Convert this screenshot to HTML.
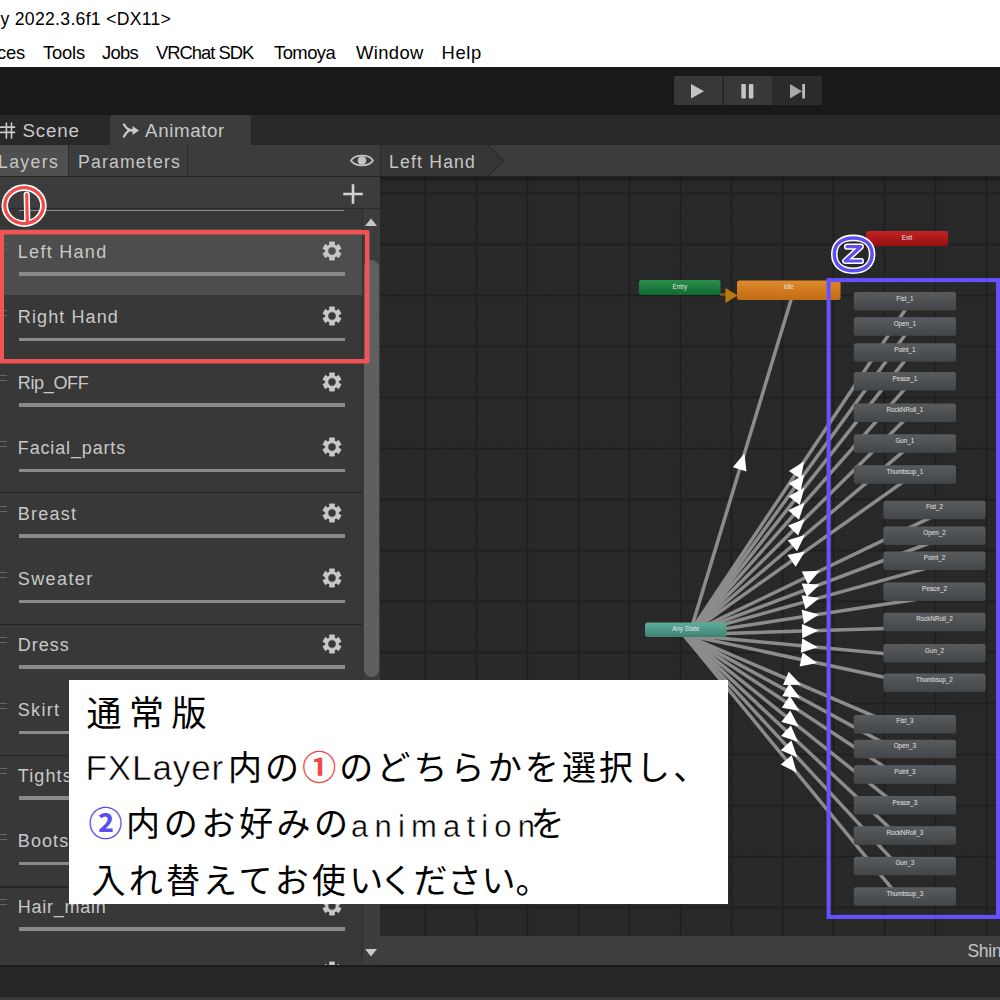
<!DOCTYPE html>
<html lang="ja"><head><meta charset="utf-8"><title>Animator</title>
<style>
*{margin:0;padding:0;box-sizing:border-box}
html,body{width:1000px;height:1000px;overflow:hidden;background:#fff}
body{position:relative;font-family:"Liberation Sans","Noto Sans CJK JP",sans-serif;color:#c4c4c4}
.abs,body>div,body>svg,body>i,body>span{position:absolute}
i{display:block;position:absolute}
#title{left:0.5px;top:8.5px;font-size:17.6px;color:#000;white-space:nowrap;letter-spacing:.3px}
#menu{left:0;top:41.5px;font-size:18.4px;color:#000;white-space:nowrap;height:22px;width:1000px}
#menu span{position:absolute;top:0}
#tool{left:0;top:67px;width:1000px;height:48px;background:#191919}
#play{left:674px;top:76px;width:148px;height:29px;background:#383838;border-radius:2px;overflow:hidden}
#tabs{left:0;top:115px;width:1000px;height:30px;background:#282828}
#tabA{left:110px;top:115px;width:141px;height:29.500px;background:#3c3c3c;border-radius:3px 3px 0 0}
.tt{font-size:18.8px;color:#c8c8c8;white-space:nowrap;top:119.5px;letter-spacing:.8px}
#sub{left:0;top:144.500px;width:1000px;height:32px;background:#3c3c3c}
#subline{left:0;top:176px;width:1000px;height:1px;background:#232323}
#lay{left:0;top:145px;width:68.500px;height:31px;background:#4f4f4f}
.sv{width:1px;height:31px;top:145px;background:#2a2a2a}
.st2{font-size:17.6px;color:#c6c6c6;white-space:nowrap;top:151.500px;letter-spacing:1.2px}
#panel{left:0;top:177px;width:380px;height:788px;background:#383838;overflow:hidden}
#track{left:362px;top:209px;width:18px;height:756px;background:#3d3d3d;border-left:1px solid #303030}
#thumb{left:363.500px;top:260px;width:15px;height:417px;background:#5f5f5f;border-radius:7.500px}
.row{position:absolute;left:0;width:362px;height:65.5px}
.row.sel{background:#4d4d4d}
.ln{position:absolute;left:17.8px;top:12.5px;font-size:18px;color:#c8c8c8;white-space:nowrap;line-height:20px}
.bar{left:18.5px;top:43.2px;width:326px;height:3.4px;background:#8a8a8a}
.h1,.h2{left:0;width:7px;height:1px;background:#666}
.h1{top:15px}.h2{top:20px}
.gear{position:absolute;left:322px;width:20px;height:20px}
.sep{left:0;width:362px;height:1.5px;background:#262626}
#graph{left:380px;top:177px;width:620px;height:759px;background-color:#292929;overflow:hidden}
#bbar{left:380px;top:936px;width:620px;height:29px;background:#3e3e3e}
#bdark{left:0;top:965px;width:1000px;height:32px;background:#262626;border-top:2px solid #1c1c1c}
#bstrip{left:0;top:997px;width:1000px;height:3px;background:#383838}
#note{left:69px;top:680px;width:659px;height:224px;background:#fff}
.hw{position:absolute;white-space:nowrap;color:#000;font-weight:400;font-size:34px;line-height:44px}
.lat{-webkit-text-stroke:.5px #fff}
svg text.nl{fill:#e4e4e4;text-anchor:middle;dominant-baseline:middle;font-family:"Liberation Sans",sans-serif}
.st{fill:url(#gst)}.any{fill:url(#gany)}.ent{fill:url(#gent)}.idl{fill:url(#gidl)}.ext{fill:url(#gext)}
</style></head><body>
<div id="title">y 2022.3.6f1 &lt;DX11&gt;</div>
<div id="menu"><span style="left:-3px;letter-spacing:-.2px">ces</span><span style="left:43px;letter-spacing:-.18px">Tools</span><span style="left:102px;letter-spacing:-.72px">Jobs</span><span style="left:156px;letter-spacing:-1px">VRChat SDK</span><span style="left:274px;letter-spacing:-.53px">Tomoya</span><span style="left:356px;letter-spacing:.37px">Window</span><span style="left:441.5px;letter-spacing:.64px">Help</span></div>
<div id="tool"></div>
<div id="play">
<svg width="148" height="29" viewBox="0 0 148 29" style="position:absolute;left:0;top:0">
<rect x="98.500" y="0" width="50" height="29" fill="#2b2b2b"/>
<rect x="48.600" y="0" width="1.200" height="29" fill="#1e1e1e"/><rect x="98" y="0" width="1" height="29" fill="#2b2b2b"/>
<polygon points="17,8 17,22.500 30,15.200" fill="#c4c4c4"/>
<rect x="67.300" y="8" width="4.600" height="14.500" rx="1" fill="#c4c4c4"/><rect x="74.800" y="8" width="4.600" height="14.500" rx="1" fill="#c4c4c4"/>
<polygon points="116,8 116,22.500 128,15.200" fill="#a8a8a8"/><rect x="128.300" y="8" width="2.600" height="14.500" fill="#c4c4c4"/>
</svg></div>
<div id="tabs"></div><div id="tabA"></div>
<svg style="left:0;top:121px" width="20" height="19" viewBox="0 0 20 19"><g stroke="#cacaca" stroke-width="1.600" fill="none"><path d="M0 6.100H15.200M0 11.400H15.200M6.400 1.500V17.800M11.500 1.500V17.800"/></g></svg>
<span class="tt" style="left:22.5px">Scene</span>
<svg style="left:121px;top:122px" width="20" height="17" viewBox="0 0 20 17"><g stroke="#cccccc" stroke-width="2.300" fill="none" stroke-linecap="round"><path d="M3 2.500C5.500 6.500 7.500 8.500 13 8.500M3 14.500C5 11 6 9.500 8.500 8.500"/></g><polygon points="11.500,4 18,8.500 11.500,13" fill="#cccccc"/></svg>
<span class="tt" style="left:145px;letter-spacing:.6px">Animator</span>
<div id="sub"></div><div id="lay"></div><i class="sv" style="left:68px"></i><i class="sv" style="left:187px"></i><i class="sv" style="left:380px"></i>
<span class="st2" style="left:-2px;letter-spacing:1.4px">Layers</span><span class="st2" style="left:78px">Parameters</span>
<svg style="left:350px;top:152px" width="24" height="17" viewBox="0 0 24 17"><path d="M1 8.500C5 2 19 2 23 8.500C19 15 5 15 1 8.500Z" fill="none" stroke="#c4c4c4" stroke-width="1.800"/><circle cx="12" cy="8.500" r="4.300" fill="#c4c4c4"/></svg>
<svg style="left:381px;top:145px" width="126" height="31" viewBox="0 0 126 31"><path d="M0 0H107L122.500 15.500L107 31H0Z" fill="#363636"/><path d="M107 0L122.500 15.500L107 31" fill="none" stroke="#2a2a2a" stroke-width="1.300"/></svg>
<span class="st2" style="left:389px">Left Hand</span>
<div id="subline"></div>

<div id="panel"></div><i style="left:0;top:177px;width:380px;height:31.500px;background:#3c3c3c;border-bottom:1px solid #2c2c2c"></i>
<i style="left:19px;top:209.500px;width:325px;height:1px;background:#8e8e8e"></i>
<svg style="left:343px;top:183.500px" width="20" height="20" viewBox="0 0 20 20"><path d="M10 0.200V19.800M0.200 10H19.800" stroke="#d2d2d2" stroke-width="2.600"/></svg>
<div id="track"></div><div id="thumb"></div>
<svg style="left:365px;top:218px" width="12" height="8" viewBox="0 0 12 8"><polygon points="6,0.500 12,8 0,8" fill="#c8c8c8"/></svg>
<svg style="left:365px;top:949.300px" width="12" height="8" viewBox="0 0 12 8"><polygon points="0,0 12,0 6,7.500" fill="#c8c8c8"/></svg>
<div id="rows" style="left:0;top:0;width:362px;height:965px;overflow:hidden">
<div class="row sel" style="top:229.0px"><i class="h1"></i><i class="h2"></i><span class="ln" style="letter-spacing:1.29px">Left Hand</span><i class="bar"></i></div><svg class="gear" viewBox="0 0 20 20" style="top:240.6px"><path fill="#c8c8c8" fill-rule="evenodd" stroke="#c8c8c8" stroke-width="0.8" stroke-linejoin="round" d="M7.67 3.82L7.58 0.92L12.42 0.92L12.33 3.82L14.19 4.90L16.66 3.37L19.08 7.55L16.51 8.93L16.51 11.07L19.08 12.45L16.66 16.63L14.19 15.10L12.33 16.18L12.42 19.08L7.58 19.08L7.67 16.18L5.81 15.10L3.34 16.63L0.92 12.45L3.49 11.07L3.49 8.93L0.92 7.55L3.34 3.37L5.81 4.90ZM5.80 10a4.2 4.2 0 1 0 8.4 0a4.2 4.2 0 1 0 -8.4 0Z"/></svg><div class="row" style="top:294.5px"><i class="h1"></i><i class="h2"></i><span class="ln" style="letter-spacing:1.11px">Right Hand</span><i class="bar"></i></div><svg class="gear" viewBox="0 0 20 20" style="top:306.1px"><path fill="#c8c8c8" fill-rule="evenodd" stroke="#c8c8c8" stroke-width="0.8" stroke-linejoin="round" d="M7.67 3.82L7.58 0.92L12.42 0.92L12.33 3.82L14.19 4.90L16.66 3.37L19.08 7.55L16.51 8.93L16.51 11.07L19.08 12.45L16.66 16.63L14.19 15.10L12.33 16.18L12.42 19.08L7.58 19.08L7.67 16.18L5.81 15.10L3.34 16.63L0.92 12.45L3.49 11.07L3.49 8.93L0.92 7.55L3.34 3.37L5.81 4.90ZM5.80 10a4.2 4.2 0 1 0 8.4 0a4.2 4.2 0 1 0 -8.4 0Z"/></svg><div class="row" style="top:360.0px"><i class="h1"></i><i class="h2"></i><span class="ln" style="letter-spacing:-0.34px">Rip_OFF</span><i class="bar"></i></div><svg class="gear" viewBox="0 0 20 20" style="top:371.6px"><path fill="#c8c8c8" fill-rule="evenodd" stroke="#c8c8c8" stroke-width="0.8" stroke-linejoin="round" d="M7.67 3.82L7.58 0.92L12.42 0.92L12.33 3.82L14.19 4.90L16.66 3.37L19.08 7.55L16.51 8.93L16.51 11.07L19.08 12.45L16.66 16.63L14.19 15.10L12.33 16.18L12.42 19.08L7.58 19.08L7.67 16.18L5.81 15.10L3.34 16.63L0.92 12.45L3.49 11.07L3.49 8.93L0.92 7.55L3.34 3.37L5.81 4.90ZM5.80 10a4.2 4.2 0 1 0 8.4 0a4.2 4.2 0 1 0 -8.4 0Z"/></svg><div class="row" style="top:425.5px"><i class="h1"></i><i class="h2"></i><span class="ln" style="letter-spacing:0.85px">Facial_parts</span><i class="bar"></i></div><svg class="gear" viewBox="0 0 20 20" style="top:437.1px"><path fill="#c8c8c8" fill-rule="evenodd" stroke="#c8c8c8" stroke-width="0.8" stroke-linejoin="round" d="M7.67 3.82L7.58 0.92L12.42 0.92L12.33 3.82L14.19 4.90L16.66 3.37L19.08 7.55L16.51 8.93L16.51 11.07L19.08 12.45L16.66 16.63L14.19 15.10L12.33 16.18L12.42 19.08L7.58 19.08L7.67 16.18L5.81 15.10L3.34 16.63L0.92 12.45L3.49 11.07L3.49 8.93L0.92 7.55L3.34 3.37L5.81 4.90ZM5.80 10a4.2 4.2 0 1 0 8.4 0a4.2 4.2 0 1 0 -8.4 0Z"/></svg><div class="row" style="top:491.0px"><i class="h1"></i><i class="h2"></i><span class="ln" style="letter-spacing:1.24px">Breast</span><i class="bar"></i></div><svg class="gear" viewBox="0 0 20 20" style="top:502.6px"><path fill="#c8c8c8" fill-rule="evenodd" stroke="#c8c8c8" stroke-width="0.8" stroke-linejoin="round" d="M7.67 3.82L7.58 0.92L12.42 0.92L12.33 3.82L14.19 4.90L16.66 3.37L19.08 7.55L16.51 8.93L16.51 11.07L19.08 12.45L16.66 16.63L14.19 15.10L12.33 16.18L12.42 19.08L7.58 19.08L7.67 16.18L5.81 15.10L3.34 16.63L0.92 12.45L3.49 11.07L3.49 8.93L0.92 7.55L3.34 3.37L5.81 4.90ZM5.80 10a4.2 4.2 0 1 0 8.4 0a4.2 4.2 0 1 0 -8.4 0Z"/></svg><div class="row" style="top:556.5px"><i class="h1"></i><i class="h2"></i><span class="ln" style="letter-spacing:1.39px">Sweater</span><i class="bar"></i></div><svg class="gear" viewBox="0 0 20 20" style="top:568.1px"><path fill="#c8c8c8" fill-rule="evenodd" stroke="#c8c8c8" stroke-width="0.8" stroke-linejoin="round" d="M7.67 3.82L7.58 0.92L12.42 0.92L12.33 3.82L14.19 4.90L16.66 3.37L19.08 7.55L16.51 8.93L16.51 11.07L19.08 12.45L16.66 16.63L14.19 15.10L12.33 16.18L12.42 19.08L7.58 19.08L7.67 16.18L5.81 15.10L3.34 16.63L0.92 12.45L3.49 11.07L3.49 8.93L0.92 7.55L3.34 3.37L5.81 4.90ZM5.80 10a4.2 4.2 0 1 0 8.4 0a4.2 4.2 0 1 0 -8.4 0Z"/></svg><div class="row" style="top:622.0px"><i class="h1"></i><i class="h2"></i><span class="ln" style="letter-spacing:1.0px">Dress</span><i class="bar"></i></div><svg class="gear" viewBox="0 0 20 20" style="top:633.6px"><path fill="#c8c8c8" fill-rule="evenodd" stroke="#c8c8c8" stroke-width="0.8" stroke-linejoin="round" d="M7.67 3.82L7.58 0.92L12.42 0.92L12.33 3.82L14.19 4.90L16.66 3.37L19.08 7.55L16.51 8.93L16.51 11.07L19.08 12.45L16.66 16.63L14.19 15.10L12.33 16.18L12.42 19.08L7.58 19.08L7.67 16.18L5.81 15.10L3.34 16.63L0.92 12.45L3.49 11.07L3.49 8.93L0.92 7.55L3.34 3.37L5.81 4.90ZM5.80 10a4.2 4.2 0 1 0 8.4 0a4.2 4.2 0 1 0 -8.4 0Z"/></svg><div class="row" style="top:687.5px"><i class="h1"></i><i class="h2"></i><span class="ln" style="letter-spacing:1.3px">Skirt</span><i class="bar"></i></div><svg class="gear" viewBox="0 0 20 20" style="top:699.1px"><path fill="#c8c8c8" fill-rule="evenodd" stroke="#c8c8c8" stroke-width="0.8" stroke-linejoin="round" d="M7.67 3.82L7.58 0.92L12.42 0.92L12.33 3.82L14.19 4.90L16.66 3.37L19.08 7.55L16.51 8.93L16.51 11.07L19.08 12.45L16.66 16.63L14.19 15.10L12.33 16.18L12.42 19.08L7.58 19.08L7.67 16.18L5.81 15.10L3.34 16.63L0.92 12.45L3.49 11.07L3.49 8.93L0.92 7.55L3.34 3.37L5.81 4.90ZM5.80 10a4.2 4.2 0 1 0 8.4 0a4.2 4.2 0 1 0 -8.4 0Z"/></svg><div class="row" style="top:753.0px"><i class="h1"></i><i class="h2"></i><span class="ln" style="letter-spacing:1.1px">Tights</span><i class="bar"></i></div><svg class="gear" viewBox="0 0 20 20" style="top:764.6px"><path fill="#c8c8c8" fill-rule="evenodd" stroke="#c8c8c8" stroke-width="0.8" stroke-linejoin="round" d="M7.67 3.82L7.58 0.92L12.42 0.92L12.33 3.82L14.19 4.90L16.66 3.37L19.08 7.55L16.51 8.93L16.51 11.07L19.08 12.45L16.66 16.63L14.19 15.10L12.33 16.18L12.42 19.08L7.58 19.08L7.67 16.18L5.81 15.10L3.34 16.63L0.92 12.45L3.49 11.07L3.49 8.93L0.92 7.55L3.34 3.37L5.81 4.90ZM5.80 10a4.2 4.2 0 1 0 8.4 0a4.2 4.2 0 1 0 -8.4 0Z"/></svg><div class="row" style="top:818.5px"><i class="h1"></i><i class="h2"></i><span class="ln" style="letter-spacing:1.1px">Boots</span><i class="bar"></i></div><svg class="gear" viewBox="0 0 20 20" style="top:830.1px"><path fill="#c8c8c8" fill-rule="evenodd" stroke="#c8c8c8" stroke-width="0.8" stroke-linejoin="round" d="M7.67 3.82L7.58 0.92L12.42 0.92L12.33 3.82L14.19 4.90L16.66 3.37L19.08 7.55L16.51 8.93L16.51 11.07L19.08 12.45L16.66 16.63L14.19 15.10L12.33 16.18L12.42 19.08L7.58 19.08L7.67 16.18L5.81 15.10L3.34 16.63L0.92 12.45L3.49 11.07L3.49 8.93L0.92 7.55L3.34 3.37L5.81 4.90ZM5.80 10a4.2 4.2 0 1 0 8.4 0a4.2 4.2 0 1 0 -8.4 0Z"/></svg><div class="row" style="top:884.0px"><i class="h1"></i><i class="h2"></i><span class="ln" style="letter-spacing:0.75px">Hair_main</span><i class="bar"></i></div><svg class="gear" viewBox="0 0 20 20" style="top:895.6px"><path fill="#c8c8c8" fill-rule="evenodd" stroke="#c8c8c8" stroke-width="0.8" stroke-linejoin="round" d="M7.67 3.82L7.58 0.92L12.42 0.92L12.33 3.82L14.19 4.90L16.66 3.37L19.08 7.55L16.51 8.93L16.51 11.07L19.08 12.45L16.66 16.63L14.19 15.10L12.33 16.18L12.42 19.08L7.58 19.08L7.67 16.18L5.81 15.10L3.34 16.63L0.92 12.45L3.49 11.07L3.49 8.93L0.92 7.55L3.34 3.37L5.81 4.90ZM5.80 10a4.2 4.2 0 1 0 8.4 0a4.2 4.2 0 1 0 -8.4 0Z"/></svg><div class="row" style="top:949.5px"><i class="h1"></i><i class="h2"></i><span class="ln" style="letter-spacing:0px"></span><i class="bar"></i></div><svg class="gear" viewBox="0 0 20 20" style="top:961.1px"><path fill="#c8c8c8" fill-rule="evenodd" stroke="#c8c8c8" stroke-width="0.8" stroke-linejoin="round" d="M7.67 3.82L7.58 0.92L12.42 0.92L12.33 3.82L14.19 4.90L16.66 3.37L19.08 7.55L16.51 8.93L16.51 11.07L19.08 12.45L16.66 16.63L14.19 15.10L12.33 16.18L12.42 19.08L7.58 19.08L7.67 16.18L5.81 15.10L3.34 16.63L0.92 12.45L3.49 11.07L3.49 8.93L0.92 7.55L3.34 3.37L5.81 4.90ZM5.80 10a4.2 4.2 0 1 0 8.4 0a4.2 4.2 0 1 0 -8.4 0Z"/></svg>
<i class="sep" style="top:491.5px"></i><i class="sep" style="top:623.5px"></i><i class="sep" style="top:754.5px"></i><i class="sep" style="top:886px"></i>
</div>

<div id="graph"></div>
<svg id="gsvg" style="left:0;top:0" width="1000" height="1000" viewBox="0 0 1000 1000">
<defs>
<clipPath id="gc"><rect x="380" y="177" width="620" height="759"/></clipPath>
<linearGradient id="gst" x1="0" y1="0" x2="0" y2="1"><stop offset="0" stop-color="#595c5f"/><stop offset="1" stop-color="#434648"/></linearGradient>
<linearGradient id="gany" x1="0" y1="0" x2="0" y2="1"><stop offset="0" stop-color="#5fae9c"/><stop offset="1" stop-color="#3c8272"/></linearGradient>
<linearGradient id="gent" x1="0" y1="0" x2="0" y2="1"><stop offset="0" stop-color="#2b8f4c"/><stop offset="1" stop-color="#106a30"/></linearGradient>
<linearGradient id="gidl" x1="0" y1="0" x2="0" y2="1"><stop offset="0" stop-color="#e08a2c"/><stop offset="1" stop-color="#c26c14"/></linearGradient>
<linearGradient id="gext" x1="0" y1="0" x2="0" y2="1"><stop offset="0" stop-color="#c22424"/><stop offset="1" stop-color="#960e0e"/></linearGradient>
<linearGradient id="gsh" x1="0" y1="0" x2="0" y2="1"><stop offset="0" stop-color="#000" stop-opacity=".35"/><stop offset="1" stop-color="#000" stop-opacity="0"/></linearGradient>
<pattern id="minor" x="425.500" y="193.500" width="5.100" height="5.100" patternUnits="userSpaceOnUse"><path d="M0 0H5.100M0 0V5.100" stroke="#242424" stroke-width="1" fill="none"/></pattern>
<pattern id="major" x="424.500" y="192.500" width="51" height="51" patternUnits="userSpaceOnUse"><rect x="0" y="0" width="51" height="2" fill="#1f1f1f"/><rect x="0" y="0" width="2" height="51" fill="#1f1f1f"/></pattern>
</defs>
<g clip-path="url(#gc)">
<rect x="380" y="177" width="620" height="759" fill="url(#minor)" opacity=".7"/>
<rect x="380" y="177" width="620" height="759" fill="url(#major)"/>
<rect x="380" y="177" width="620" height="7" fill="url(#gsh)"/>
<g stroke="#8c8c8c" stroke-width="3.500" stroke-linecap="butt">
<line x1="689.9" y1="632.5" x2="909.1" y2="304.0"/><line x1="689.8" y1="632.6" x2="909.0" y2="329.5"/><line x1="689.7" y1="632.8" x2="908.8" y2="355.7"/><line x1="689.5" y1="633.0" x2="908.6" y2="384.7"/><line x1="689.3" y1="633.3" x2="908.4" y2="416.2"/><line x1="689.0" y1="633.5" x2="908.1" y2="447.4"/><line x1="688.6" y1="633.8" x2="907.8" y2="478.6"/><line x1="687.9" y1="634.2" x2="936.7" y2="514.6"/><line x1="687.5" y1="634.4" x2="936.3" y2="540.5"/><line x1="687.1" y1="634.5" x2="935.8" y2="565.6"/><line x1="686.5" y1="634.6" x2="935.3" y2="596.6"/><line x1="685.9" y1="634.7" x2="934.7" y2="627.0"/><line x1="685.3" y1="634.7" x2="934.0" y2="658.2"/><line x1="684.7" y1="634.6" x2="933.5" y2="687.7"/><line x1="683.8" y1="634.3" x2="902.9" y2="728.7"/><line x1="683.4" y1="634.1" x2="902.5" y2="753.4"/><line x1="683.0" y1="633.9" x2="902.1" y2="778.6"/><line x1="682.6" y1="633.6" x2="901.8" y2="809.2"/><line x1="682.3" y1="633.3" x2="901.5" y2="839.1"/><line x1="682.1" y1="633.1" x2="901.2" y2="869.4"/><line x1="681.9" y1="632.9" x2="901.0" y2="899.6"/><line x1="690.5" y1="631.2" x2="793.5" y2="291.7"/>
</g>
<g fill="#ffffff">
<polygon points="804.0,461.4 800.9,479.1 788.9,471.1"/><polygon points="804.2,474.4 800.4,491.9 788.7,483.5"/><polygon points="804.3,487.8 799.8,505.1 788.5,496.2"/><polygon points="804.5,502.7 799.0,519.7 788.2,510.2"/><polygon points="804.7,519.0 798.1,535.6 788.0,525.4"/><polygon points="804.8,535.1 797.0,551.2 787.7,540.3"/><polygon points="804.9,551.5 795.7,566.8 787.4,555.1"/><polygon points="819.7,570.8 808.0,584.4 801.8,571.4"/><polygon points="819.6,584.6 806.8,597.1 801.7,583.6"/><polygon points="819.4,597.9 805.5,609.2 801.6,595.3"/><polygon points="819.0,614.4 803.9,624.0 801.7,609.7"/><polygon points="818.5,630.6 802.3,638.3 801.9,623.9"/><polygon points="817.8,647.2 800.8,652.8 802.2,638.5"/><polygon points="817.1,662.9 799.6,666.5 802.6,652.4"/><polygon points="800.9,684.8 783.0,684.9 788.7,671.7"/><polygon points="800.1,697.7 782.3,696.2 789.2,683.5"/><polygon points="799.4,710.8 781.8,707.7 789.7,695.7"/><polygon points="798.6,726.5 781.3,721.9 790.3,710.6"/><polygon points="797.9,741.8 781.0,735.9 790.9,725.4"/><polygon points="797.2,757.3 780.8,750.2 791.4,740.4"/><polygon points="796.7,772.6 780.7,764.5 791.8,755.3"/><polygon points="744.4,453.6 746.5,471.4 732.8,467.2"/>
</g>
<path d="M720 294.500H727" stroke="#8a5a10" stroke-width="2.500"/><polygon points="725.500,288 737.500,295.500 725.500,303" fill="#b87a10"/>
<rect class="st" x="853.8" y="292" width="102.2" height="18.5" rx="2.5"/><text class="nl" x="904.9" y="298.9" font-size="6.3">Fist_1</text><rect class="st" x="853.8" y="317.3" width="102.2" height="18.5" rx="2.5"/><text class="nl" x="904.9" y="324.2" font-size="6.3">Open_1</text><rect class="st" x="853.8" y="343.3" width="102.2" height="18.5" rx="2.5"/><text class="nl" x="904.9" y="350.2" font-size="6.3">Point_1</text><rect class="st" x="853.8" y="372.1" width="102.2" height="18.5" rx="2.5"/><text class="nl" x="904.9" y="379.0" font-size="6.3">Peace_1</text><rect class="st" x="853.8" y="403.4" width="102.2" height="18.5" rx="2.5"/><text class="nl" x="904.9" y="410.3" font-size="6.3">RockNRoll_1</text><rect class="st" x="853.8" y="434.3" width="102.2" height="18.5" rx="2.5"/><text class="nl" x="904.9" y="441.2" font-size="6.3">Gun_1</text><rect class="st" x="853.8" y="465.3" width="102.2" height="18.5" rx="2.5"/><text class="nl" x="904.9" y="472.2" font-size="6.3">Thumbsup_1</text><rect class="st" x="883.4" y="500.8" width="102.2" height="18.5" rx="2.5"/><text class="nl" x="934.5" y="507.7" font-size="6.3">Fist_2</text><rect class="st" x="883.4" y="526.6" width="102.2" height="18.5" rx="2.5"/><text class="nl" x="934.5" y="533.5" font-size="6.3">Open_2</text><rect class="st" x="883.4" y="551.5" width="102.2" height="18.5" rx="2.5"/><text class="nl" x="934.5" y="558.4" font-size="6.3">Point_2</text><rect class="st" x="883.4" y="582.4" width="102.2" height="18.5" rx="2.5"/><text class="nl" x="934.5" y="589.3" font-size="6.3">Peace_2</text><rect class="st" x="883.4" y="612.8" width="102.2" height="18.5" rx="2.5"/><text class="nl" x="934.5" y="619.7" font-size="6.3">RockNRoll_2</text><rect class="st" x="883.4" y="644" width="102.2" height="18.5" rx="2.5"/><text class="nl" x="934.5" y="650.9" font-size="6.3">Gun_2</text><rect class="st" x="883.4" y="673.6" width="102.2" height="18.5" rx="2.5"/><text class="nl" x="934.5" y="680.5" font-size="6.3">Thumbsup_2</text><rect class="st" x="853.8" y="714.9" width="102.2" height="18.5" rx="2.5"/><text class="nl" x="904.9" y="721.8" font-size="6.3">Fist_3</text><rect class="st" x="853.8" y="739.8" width="102.2" height="18.5" rx="2.5"/><text class="nl" x="904.9" y="746.7" font-size="6.3">Open_3</text><rect class="st" x="853.8" y="765.2" width="102.2" height="18.5" rx="2.5"/><text class="nl" x="904.9" y="772.1" font-size="6.3">Point_3</text><rect class="st" x="853.8" y="796" width="102.2" height="18.5" rx="2.5"/><text class="nl" x="904.9" y="802.9" font-size="6.3">Peace_3</text><rect class="st" x="853.8" y="826.2" width="102.2" height="18.5" rx="2.5"/><text class="nl" x="904.9" y="833.1" font-size="6.3">RockNRoll_3</text><rect class="st" x="853.8" y="856.8" width="102.2" height="18.5" rx="2.5"/><text class="nl" x="904.9" y="863.7" font-size="6.3">Gun_3</text><rect class="st" x="853.8" y="887.2" width="102.2" height="18.5" rx="2.5"/><text class="nl" x="904.9" y="894.1" font-size="6.3">Thumbsup_3</text><rect class="any" x="645" y="622.4" width="81.5" height="14.6" rx="2.5"/><text class="nl" x="685.8" y="629.3" font-size="6.3">Any State</text><rect class="ent" x="639" y="280" width="81.5" height="15" rx="2.5"/><text class="nl" x="679.8" y="286.9" font-size="6.3">Entry</text><rect class="idl" x="737" y="280.5" width="103.5" height="19.5" rx="2.5"/><text class="nl" x="788.8" y="287.4" font-size="6.3">Idle</text><rect class="ext" x="866" y="231" width="82" height="15" rx="2.5"/><text class="nl" x="907.0" y="237.9" font-size="6.3">Exit</text>
</g>
</svg>
<div id="bbar"></div><span class="st2" style="left:967.5px;top:941px;font-size:17.5px;letter-spacing:-.3px">Shin</span>
<div id="bdark"></div><div id="bstrip"></div>

<!-- annotations -->
<svg style="left:0;top:0" width="1000" height="1000" viewBox="0 0 1000 1000">
<rect x="1.700" y="232.250" width="365.500" height="129" fill="none" stroke="#f25454" stroke-width="4.600" stroke-linejoin="round"/>
<rect x="828.600" y="280.100" width="169.500" height="636.800" fill="none" stroke="#6452ff" stroke-width="4.100"/>
<ellipse cx="24.100" cy="205.600" rx="19.300" ry="18" fill="none" stroke="#fff" stroke-width="6.600"/>
<path d="M26.700 194.500L27.300 220.500" stroke="#fff" stroke-width="6.200" stroke-linecap="round"/>
<ellipse cx="24.100" cy="205.600" rx="19.300" ry="18" fill="none" stroke="#f04a4a" stroke-width="3.300"/>
<path d="M26.700 194.500L27.300 221.500" stroke="#f04a4a" stroke-width="3.200" stroke-linecap="round"/>
<path d="M834.3 254.3C834.3 244.1 841.5 237.9 853.2 237.9S872.1 244.1 872.1 254.3S864.9 270.7 853.2 270.7S834.3 264.5 834.3 254.3Z" fill="none" stroke="#fff" stroke-width="6.600"/>
<path d="M834.3 254.3C834.3 244.1 841.5 237.9 853.2 237.9S872.1 244.1 872.1 254.3S864.9 270.7 853.2 270.7S834.3 264.5 834.3 254.3Z" fill="none" stroke="#5c4ef2" stroke-width="3.500"/>
<path d="M847 246.700H860.800L845.200 261H861" fill="none" stroke="#fff" stroke-width="6.200" stroke-linecap="round" stroke-linejoin="round"/>
<path d="M847 246.700H860.800L845.200 261H861" fill="none" stroke="#5c4ef2" stroke-width="3.200" stroke-linecap="round" stroke-linejoin="round"/>
</svg>

<div id="note"></div>
<span class="hw" id="l1" style="left:86.500px;top:691.500px;font-size:35px;letter-spacing:7.500px">通常版</span>
<span class="hw lat" id="l2a" style="left:85.500px;top:746px;font-size:35px;letter-spacing:.900px">FXLayer</span>
<span class="hw" id="l2b" style="left:228px;top:746px;letter-spacing:3.100px">内の<span style="color:#f04848;font-weight:700">①</span>のどちらかを選択し、</span>
<span class="hw" id="l3a" style="left:88.500px;top:802px;letter-spacing:3.600px"><span style="color:#5a4cf0;font-weight:700">②</span>内のお好みの</span>
<span class="hw lat" id="l3b" style="left:351px;top:804.5px;font-size:31px;letter-spacing:6.200px;-webkit-text-stroke:.4px #fff">animation</span>
<span class="hw" id="l3c" style="left:530.500px;top:802px">を</span>
<span class="hw" id="l4" style="left:91.500px;top:859px;letter-spacing:3.200px">入れ替えてお使い<span style="letter-spacing:0;margin-left:-7px">ください。</span></span>
</body></html>
